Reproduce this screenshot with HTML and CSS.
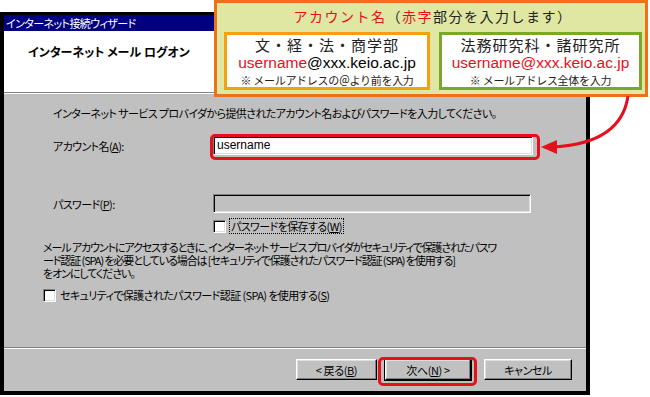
FILE: index.html
```html
<!DOCTYPE html>
<html lang="ja">
<head>
    <meta charset="UTF-8">
    <meta name="viewport" content="width=device-width, initial-scale=1.0">
    <title>インターネット メール ログオン</title>
    <link rel="stylesheet" href="styles.css">
</head>
<body>

<div class="stage">

    <!-- ウィザード本体 -->
    <div class="window">
        <div class="titlebar">インターネット接続ウィザード</div>

        <div class="header">
            <h1>インターネット メール ログオン</h1>
        </div>

        <div class="content">
            <p class="intro">インターネット サービス プロバイダから提供されたアカウント名およびパスワードを入力してください。</p>

            <div class="row row-account">
                <label>アカウント名(<u>A</u>):</label>
                <div class="field">username</div>
            </div>

            <div class="row row-pass">
                <label>パスワード(<u>P</u>):</label>
                <div class="field disabled"></div>
            </div>

            <div class="check check-save">
                <span class="box"></span>
                <span class="focus">パスワードを保存する(<u>W</u>)</span>
            </div>

            <p class="note">メール アカウントにアクセスするときに、インターネット サービス プロバイダがセキュリティで保護されたパスワ<br>ード認証 (SPA) を必要としている場合は [セキュリティで保護されたパスワード認証 (SPA) を使用する]<br>をオンにしてください。</p>

            <div class="check check-spa">
                <span class="box"></span>
                <span>セキュリティで保護されたパスワード認証 (SPA) を使用する(<u>S</u>)</span>
            </div>
        </div>

        <div class="footer">
            <button class="btn btn-back">&lt; 戻る(<u>B</u>)</button>
            <button class="btn btn-next">次へ(<u>N</u>) &gt;</button>
            <button class="btn btn-cancel">キャンセル</button>
        </div>
    </div>

    <!-- 説明の吹き出し -->
    <div class="callout">
        <div class="callout-title"><span class="red">アカウント名</span>（<span class="red">赤字</span>部分を入力します）</div>
        <div class="callout-boxes">
            <div class="cbox cbox-orange">
                <div class="cbox-head">文・経・法・商学部</div>
                <div class="cbox-mail"><span class="red">username</span>@xxx.keio.ac.jp</div>
                <div class="cbox-note">※ メールアドレスの＠より前を入力</div>
            </div>
            <div class="cbox cbox-green">
                <div class="cbox-head">法務研究科・諸研究所</div>
                <div class="cbox-mail red">username@xxx.keio.ac.jp</div>
                <div class="cbox-note">※ メールアドレス全体を入力</div>
            </div>
        </div>
    </div>

    <!-- 赤枠と矢印 -->
    <div class="mark mark-account"></div>
    <div class="mark mark-next"></div>
    <svg class="arrow" width="650" height="397" viewBox="0 0 650 397">
        <path d="M628 96 C624 124 604 144 554 147" fill="none" stroke="#e5101c" stroke-width="3"/>
        <polygon points="541,147 557,140 557,154" fill="#e5101c"/>
    </svg>

</div>

</body>
</html>
```

FILE: styles.css
```css
/* ページ全体 */
body {
    margin: 0;
    background-color: #fff;
    font-family: "Noto Sans CJK JP", "Liberation Sans", sans-serif;
    font-size: 11px;
    letter-spacing: -0.6px;
    font-feature-settings: "palt";
    color: #000;
}

.stage {
    position: relative;
    width: 650px;
    height: 397px;
    overflow: hidden;
}

u {
    text-decoration: underline;
}

/* ウィザードの枠 */
.window {
    width: 582px;
    margin-top: 12px;
    border: 4px solid #000;
    border-top-width: 3px;
    background-color: #c0c0c0;
}

.titlebar {
    height: 16px;
    line-height: 16px;
    padding-left: 2px;
    background-color: #000080;
    color: #fff;
}

.header {
    height: 62px;
    background-color: #fff;
    border-bottom: 1px solid #808080;
    box-shadow: 0 1px 0 #fff;
    padding: 13px 0 0 24px;
    box-sizing: border-box;
}

.header h1 {
    margin: 0;
    font-size: 12px;
    font-weight: bold;
    line-height: 16px;
    letter-spacing: 0;
}

/* 入力欄のエリア */
.content {
    height: 255px;
    padding: 13px 0 0 39px;
    box-sizing: border-box;
    border-bottom: 1px solid #808080;
    white-space: nowrap;
}

.intro {
    margin: 0 0 0 10px;
    line-height: 14px;
}

.row {
    display: flex;
    align-items: center;
    margin-left: 10px;
}

.row label {
    width: 160px;
}

.row-account {
    margin-top: 16px;
}

.row-pass {
    margin-top: 39px;
}

.field {
    width: 320px;
    height: 19px;
    line-height: 17px;
    padding-left: 3px;
    box-sizing: border-box;
    background-color: #fff;
    border: 1px solid;
    border-color: #808080 #fff #fff #808080;
    box-shadow: inset 1px 1px #000, inset -1px -1px #dfdfdf;
    font-family: "Liberation Sans", sans-serif;
    font-size: 12px;
    letter-spacing: 0;
}

.field.disabled {
    width: 318px;
    background-color: #c0c0c0;
}

.check {
    display: flex;
    align-items: center;
    gap: 4px;
    line-height: 14px;
}

.check .box {
    width: 13px;
    height: 13px;
    box-sizing: border-box;
    background-color: #fff;
    border: 1px solid;
    border-color: #808080 #fff #fff #808080;
    box-shadow: inset 1px 1px #000, inset -1px -1px #dfdfdf;
}

.check-save {
    margin: 6px 0 0 170px;
}

.check-save .focus {
    outline: 1px dotted #000;
    padding: 0 1px;
}

.note {
    margin: 8px 0 0 0;
    line-height: 13px;
    letter-spacing: -1.1px;
}

.check-spa {
    margin-top: 8px;
}

/* ボタン */
.footer {
    height: 43px;
    border-top: 1px solid #fff;
    display: flex;
    align-items: flex-start;
    justify-content: flex-end;
    padding: 10px 14px 0 0;
    box-sizing: border-box;
}

.btn {
    height: 21px;
    margin: 0;
    padding: 0;
    font-family: inherit;
    font-size: 11px;
    letter-spacing: -0.4px;
    font-feature-settings: "palt";
    background-color: #c0c0c0;
    border: 1px solid;
    border-color: #fff #000 #000 #fff;
    box-shadow: inset -1px -1px #808080, inset 1px 1px #dfdfdf;
    color: #000;
}

.btn-back {
    width: 81px;
}

.btn-next {
    width: 86px;
    margin-left: 8px;
    outline: 1px solid #000;
}

.btn-cancel {
    width: 88px;
    margin-left: 13px;
}

/* 吹き出し */
.callout {
    position: absolute;
    left: 214px;
    top: 0;
    width: 434px;
    height: 97px;
    box-sizing: border-box;
    border: 3px solid #f07018;
    background-color: #dfe7a3;
    padding: 4px 3px 0 7px;
    font-family: "Noto Sans CJK JP", sans-serif;
    font-feature-settings: normal;
    letter-spacing: 0;
}

.red {
    color: #e5101c;
}

.callout-title {
    text-align: center;
    font-size: 14px;
    line-height: 18px;
    letter-spacing: 1.5px;
    color: #222;
}

.callout-boxes {
    display: flex;
    gap: 9px;
    margin-top: 7px;
}

.cbox {
    height: 58px;
    box-sizing: border-box;
    border: 3px solid;
    background-color: #fff;
    text-align: center;
    padding-top: 1px;
}

.cbox-orange {
    width: 206px;
    border-color: #f3a012;
}

.cbox-green {
    width: 203px;
    border-color: #7aa82c;
}

.cbox-head {
    font-size: 15px;
    line-height: 18px;
    letter-spacing: 1px;
    color: #222;
}

.cbox-mail {
    font-family: "Liberation Sans", sans-serif;
    font-size: 15.5px;
    line-height: 18px;
}

.cbox-note {
    font-size: 11px;
    line-height: 16px;
    letter-spacing: -0.3px;
    color: #222;
}

/* 赤枠 */
.mark {
    position: absolute;
    border: 3px solid #e5101c;
    border-radius: 5px;
    box-sizing: border-box;
}

.mark-account {
    left: 210px;
    top: 134px;
    width: 330px;
    height: 26px;
}

.mark-next {
    left: 378px;
    top: 357px;
    width: 99px;
    height: 29px;
}

.arrow {
    position: absolute;
    left: 0;
    top: 0;
    pointer-events: none;
}
```
